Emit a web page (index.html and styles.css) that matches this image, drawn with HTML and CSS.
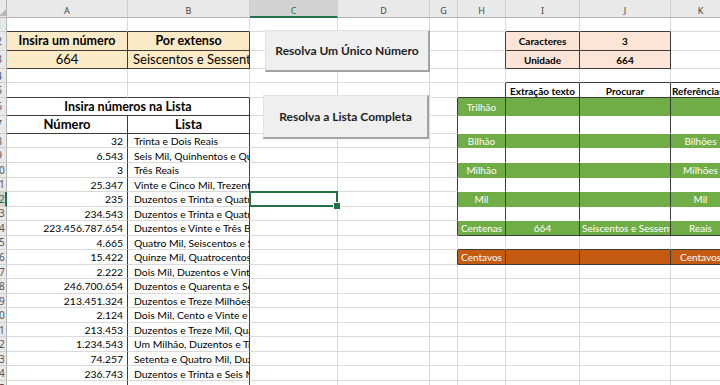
FILE: index.html
```html
<!DOCTYPE html>
<html lang="pt">
<head>
<meta charset="utf-8">
<title>Número por extenso</title>
<link rel="stylesheet" href="styles.css">
</head>
<body>
<div class="sheet">
  <!-- column headers -->
  <div class="corner"><svg width="7" height="18" viewBox="0 0 7 18"><polygon points="7,8 7,16 -1,16" fill="#b8b8b8"/></svg></div>
  <div class="ch">A</div><div class="ch">B</div><div class="ch sel">C</div><div class="ch">D</div><div class="ch">G</div><div class="ch">H</div><div class="ch">I</div><div class="ch">J</div><div class="ch">K</div>

  <!-- row 1 -->
  <div class="rh"><span>1</span></div>
  <div class="c d-b"></div><div class="c d-b"></div><div class="c"></div><div class="c"></div><div class="c"></div><div class="c"></div><div class="c d-b"></div><div class="c d-b"></div><div class="c"></div>

  <!-- row 2 -->
  <div class="rh"><span>2</span></div>
  <div class="c tan b ctr d-r d-b">Insira um número</div><div class="c tan b ctr d-r d-b">Por extenso</div><div class="c"></div><div class="c"></div><div class="c"></div><div class="c d-r"></div><div class="c peach b sm ctr d-r d-b">Caracteres</div><div class="c peach b sm ctr d-r d-b">3</div><div class="c"></div>

  <!-- row 3 -->
  <div class="rh"><span>3</span></div>
  <div class="c tan lg ctr d-r d-b">664</div><div class="c tan lg lf pl5 d-r d-b">Seiscentos e Sessenta e Quatro Reais</div><div class="c"></div><div class="c"></div><div class="c"></div><div class="c d-r"></div><div class="c peach b sm ctr d-r d-b">Unidade</div><div class="c peach b sm ctr d-r d-b">664</div><div class="c"></div>

  <!-- row 4 -->
  <div class="rh"><span>4</span></div>
  <div class="c"></div><div class="c"></div><div class="c"></div><div class="c"></div><div class="c"></div><div class="c"></div><div class="c d-b"></div><div class="c d-b"></div><div class="c d-b"></div>

  <!-- row 5 -->
  <div class="rh"><span>5</span></div>
  <div class="c d-b"></div><div class="c d-b"></div><div class="c"></div><div class="c"></div><div class="c"></div><div class="c d-r d-b"></div><div class="c b sm ctr d-r d-b">Extração texto</div><div class="c b sm ctr d-r d-b">Procurar</div><div class="c b sm lf pl1 d-r d-b">Referências</div>

  <!-- row 6 -->
  <div class="rh"><span>6</span></div>
  <div class="c span2 b ctr d-r d-b">Insira números na Lista</div><div class="c"></div><div class="c"></div><div class="c d-r"></div><div class="c grn sm ctr d-r">Trilhão</div><div class="c grn d-r"></div><div class="c grn d-r"></div><div class="c grn d-r"></div>

  <!-- row 7 -->
  <div class="rh"><span>7</span></div>
  <div class="c b big ctr d-r d-b">Número</div><div class="c b big ctr d-r d-b">Lista</div><div class="c"></div><div class="c"></div><div class="c d-r"></div><div class="c nb d-r"></div><div class="c nb d-r"></div><div class="c nb d-r"></div><div class="c nb d-r"></div>

  <!-- row 8 -->
  <div class="rh"><span>8</span></div>
  <div class="c rt d-r">32</div><div class="c lf pl6 d-r">Trinta e Dois Reais</div><div class="c"></div><div class="c"></div><div class="c d-r"></div><div class="c grn sm ctr d-r">Bilhão</div><div class="c grn d-r"></div><div class="c grn d-r"></div><div class="c grn sm ctr d-r">Bilhões</div>

  <!-- row 9 -->
  <div class="rh"><span>9</span></div>
  <div class="c rt d-r">6.543</div><div class="c lf pl6 d-r">Seis Mil, Quinhentos e Quarenta e Três Reais</div><div class="c"></div><div class="c"></div><div class="c d-r"></div><div class="c nb d-r"></div><div class="c nb d-r"></div><div class="c nb d-r"></div><div class="c nb d-r"></div>

  <!-- row 10 -->
  <div class="rh"><span>10</span></div>
  <div class="c rt d-r">3</div><div class="c lf pl6 d-r">Três Reais</div><div class="c"></div><div class="c"></div><div class="c d-r"></div><div class="c grn sm ctr d-r">Milhão</div><div class="c grn d-r"></div><div class="c grn d-r"></div><div class="c grn sm ctr d-r">Milhões</div>

  <!-- row 11 -->
  <div class="rh"><span>11</span></div>
  <div class="c rt d-r">25.347</div><div class="c lf pl6 d-r">Vinte e Cinco Mil, Trezentos e Quarenta e Sete Reais</div><div class="c"></div><div class="c"></div><div class="c d-r"></div><div class="c nb d-r"></div><div class="c nb d-r"></div><div class="c nb d-r"></div><div class="c nb d-r"></div>

  <!-- row 12 -->
  <div class="rh sel"><span>12</span></div>
  <div class="c rt d-r">235</div><div class="c lf pl6 d-r">Duzentos e Trinta e Quatro Reais</div><div class="c active"></div><div class="c"></div><div class="c d-r"></div><div class="c grn sm ctr d-r">Mil</div><div class="c grn d-r"></div><div class="c grn d-r"></div><div class="c grn sm ctr d-r">Mil</div>

  <!-- row 13 -->
  <div class="rh"><span>13</span></div>
  <div class="c rt d-r">234.543</div><div class="c lf pl6 d-r">Duzentos e Trinta e Quatro Mil, Quinhentos e Quarenta e Três Reais</div><div class="c"></div><div class="c"></div><div class="c d-r"></div><div class="c nb d-r"></div><div class="c nb d-r"></div><div class="c nb d-r"></div><div class="c nb d-r"></div>

  <!-- row 14 -->
  <div class="rh"><span>14</span></div>
  <div class="c rt d-r">223.456.787.654</div><div class="c lf pl6 d-r">Duzentos e Vinte e Três Bilhões, Quatrocentos e Cinquenta e Seis Milhões</div><div class="c"></div><div class="c"></div><div class="c d-r"></div><div class="c grn sm ctr d-r d-b">Centenas</div><div class="c grn sm ctr d-r d-b">664</div><div class="c grn sm lf pl2 d-r d-b">Seiscentos e Sessenta e Quatro</div><div class="c grn sm ctr d-r d-b">Reais</div>

  <!-- row 15 -->
  <div class="rh"><span>15</span></div>
  <div class="c rt d-r">4.665</div><div class="c lf pl6 d-r">Quatro Mil, Seiscentos e Sessenta e Cinco Reais</div><div class="c"></div><div class="c"></div><div class="c"></div><div class="c d-b"></div><div class="c d-b"></div><div class="c d-b"></div><div class="c d-b"></div>

  <!-- row 16 -->
  <div class="rh"><span>16</span></div>
  <div class="c rt d-r">15.422</div><div class="c lf pl6 d-r">Quinze Mil, Quatrocentos e Vinte e Dois Reais</div><div class="c"></div><div class="c"></div><div class="c d-r"></div><div class="c org sm ctr d-r d-b">Centavos</div><div class="c org d-r d-b"></div><div class="c org d-r d-b"></div><div class="c org sm ctr d-r d-b">Centavos</div>

  <!-- row 17 -->
  <div class="rh"><span>17</span></div>
  <div class="c rt d-r">2.222</div><div class="c lf pl6 d-r">Dois Mil, Duzentos e Vinte e Dois Reais</div><div class="c"></div><div class="c"></div><div class="c"></div><div class="c"></div><div class="c"></div><div class="c"></div><div class="c"></div>

  <!-- row 18 -->
  <div class="rh"><span>18</span></div>
  <div class="c rt d-r">246.700.654</div><div class="c lf pl6 d-r">Duzentos e Quarenta e Seis Milhões, Setecentos Mil</div><div class="c"></div><div class="c"></div><div class="c"></div><div class="c"></div><div class="c"></div><div class="c"></div><div class="c"></div>

  <!-- row 19 -->
  <div class="rh"><span>19</span></div>
  <div class="c rt d-r">213.451.324</div><div class="c lf pl6 d-r">Duzentos e Treze Milhões, Quatrocentos e Cinquenta e Um Mil</div><div class="c"></div><div class="c"></div><div class="c"></div><div class="c"></div><div class="c"></div><div class="c"></div><div class="c"></div>

  <!-- row 20 -->
  <div class="rh"><span>20</span></div>
  <div class="c rt d-r">2.124</div><div class="c lf pl6 d-r">Dois Mil, Cento e Vinte e Quatro Reais</div><div class="c"></div><div class="c"></div><div class="c"></div><div class="c"></div><div class="c"></div><div class="c"></div><div class="c"></div>

  <!-- row 21 -->
  <div class="rh"><span>21</span></div>
  <div class="c rt d-r">213.453</div><div class="c lf pl6 d-r">Duzentos e Treze Mil, Quatrocentos e Cinquenta e Três Reais</div><div class="c"></div><div class="c"></div><div class="c"></div><div class="c"></div><div class="c"></div><div class="c"></div><div class="c"></div>

  <!-- row 22 -->
  <div class="rh"><span>22</span></div>
  <div class="c rt d-r">1.234.543</div><div class="c lf pl6 d-r">Um Milhão, Duzentos e Trinta e Quatro Mil</div><div class="c"></div><div class="c"></div><div class="c"></div><div class="c"></div><div class="c"></div><div class="c"></div><div class="c"></div>

  <!-- row 23 -->
  <div class="rh"><span>23</span></div>
  <div class="c rt d-r">74.257</div><div class="c lf pl6 d-r">Setenta e Quatro Mil, Duzentos e Cinquenta e Sete Reais</div><div class="c"></div><div class="c"></div><div class="c"></div><div class="c"></div><div class="c"></div><div class="c"></div><div class="c"></div>

  <!-- row 24 -->
  <div class="rh"><span>24</span></div>
  <div class="c rt d-r">236.743</div><div class="c lf pl6 d-r">Duzentos e Trinta e Seis Mil, Setecentos e Quarenta e Três Reais</div><div class="c"></div><div class="c"></div><div class="c"></div><div class="c"></div><div class="c"></div><div class="c"></div><div class="c"></div>

  <!-- row 25 -->
  <div class="rh"><span>25</span></div>
  <div class="c rt d-r low"></div><div class="c lf pl6 d-r low">Um Milhão e Quinhentos Mil Reais</div><div class="c"></div><div class="c"></div><div class="c"></div><div class="c"></div><div class="c"></div><div class="c"></div><div class="c"></div>

  <!-- form buttons lying over the sheet -->
  <div class="btn btn-one">Resolva Um Único Número</div>
  <div class="btn btn-list">Resolva a Lista Completa</div>
</div>
</body>
</html>
```

FILE: styles.css
```css
* { box-sizing: border-box; }

body {
  margin: 0;
  width: 720px;
  height: 385px;
  overflow: hidden;
  background: #ffffff;
  font-family: Lato, "Liberation Sans", sans-serif;
  font-size: 10.4px;
  color: #000000;
}

.sheet {
  position: relative;
  display: grid;
  grid-template-columns: 7px 121px 122px 88px 92px 28px 48px 74px 91px 60px;
  grid-template-rows: 18px 14.3px 18.4px 18.3px 14.3px 14.7px 17.7px 18.3px repeat(18, 14.54px);
  width: 731px;
}

/* headers */
.corner {
  background: #e9e9e9;
  border-right: 1px solid #b5b5b5;
  border-bottom: 1px solid #b5b5b5;
  overflow: hidden;
}
.corner svg { display: block; }

.ch {
  background: #e9e9e9;
  border-right: 1px solid #cdcdcd;
  border-bottom: 1px solid #b5b5b5;
  font-family: "Noto Sans", "DejaVu Sans", sans-serif;
  font-size: 9px;
  color: #444444;
  display: flex;
  justify-content: center;
  align-items: center;
  padding-top: 3px;
}
.ch.sel {
  background: #d3d3d3;
  color: #217346;
  border-bottom: 2px solid #217346;
  padding-top: 4px;
}

.rh {
  background: #e9e9e9;
  border-right: 1px solid #b5b5b5;
  border-bottom: 1px solid #cfcfcf;
  font-family: "Noto Sans", "DejaVu Sans", sans-serif;
  font-size: 10px;
  color: #555555;
  display: flex;
  align-items: center;
  overflow: hidden;
}
.rh span {
  flex: none;
  width: 30px;
  margin-left: -16px;
  text-align: center;
  line-height: 1;
}
.rh.sel {
  background: #d3d3d3;
  color: #217346;
  border-right: 2px solid #217346;
}

/* cells */
.c {
  border-right: 1px solid #dadada;
  border-bottom: 1px solid #dadada;
  overflow: hidden;
  white-space: nowrap;
  display: flex;
  align-items: center;
  padding: 1px 4px 0;
  min-width: 0;
  line-height: 1;
}
.span2 { grid-column: span 2; }

.lg { font-size: 13px; }
.b { font-weight: 700; font-size: 12.5px; }
.big { font-size: 13px; }
.sm { font-size: 10px; padding-left: 1px; padding-right: 1px; }
.ctr { justify-content: center; }
.lf { justify-content: flex-start; }
.rt { justify-content: flex-end; }
.pl1 { padding-left: 1px; }
.pl2 { padding-left: 2px; }
.pl5 { padding-left: 5px; }
.pl6 { padding-left: 6px; }
.low { padding-top: 5px; }

.tan { background: #fce9c6; }
.peach { background: #fce4d6; }
.nb { border-bottom-color: #ffffff; }
.grn {
  background: #70ad47;
  color: #ffffff;
  border-bottom-color: #70ad47;
}
.org {
  background: #c55a11;
  color: #ffffff;
}

.d-r { border-right-color: #3c3c3c; }
.d-b { border-bottom-color: #3c3c3c; }

/* active cell */
.active {
  position: relative;
  overflow: visible;
}
.active::after {
  content: "";
  position: absolute;
  left: -1px;
  top: -1px;
  right: -1px;
  bottom: -1px;
  border: 2px solid #217346;
}
.active::before {
  content: "";
  position: absolute;
  right: -4px;
  bottom: -4px;
  width: 6px;
  height: 6px;
  background: #217346;
  border: 1px solid #ffffff;
  z-index: 2;
}

/* form buttons */
.btn {
  position: absolute;
  display: flex;
  align-items: center;
  justify-content: center;
  background: #efefef;
  border-top: 1px solid #e2e2e2;
  border-left: 1px solid #e2e2e2;
  border-right: 2px solid #a3a3a3;
  border-bottom: 2px solid #a3a3a3;
  font-weight: 700;
  font-size: 12px;
  color: #1e1e1e;
}
.btn-one {
  left: 265px;
  top: 30px;
  width: 165px;
  height: 42px;
}
.btn-list {
  left: 263px;
  top: 95px;
  width: 166px;
  height: 44px;
}
```
